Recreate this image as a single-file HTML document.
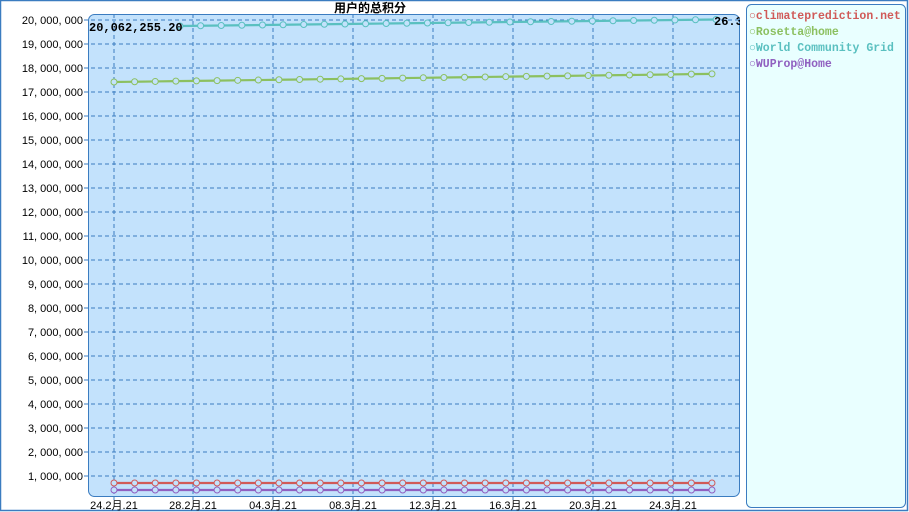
<!DOCTYPE html>
<html><head><meta charset="utf-8"><style>
html,body{margin:0;padding:0;background:#fff;}
svg{display:block;font-family:"Liberation Sans","Noto Sans CJK SC",sans-serif;}
</style></head><body>
<svg width="909" height="512" viewBox="0 0 909 512" xmlns="http://www.w3.org/2000/svg">
<defs>
<marker id="mr" markerWidth="8" markerHeight="8" refX="4" refY="4" markerUnits="userSpaceOnUse"><circle cx="4" cy="4" r="3" fill="#c3e2fc" stroke="#d05a58" stroke-width="1"/></marker>
<marker id="mg" markerWidth="8" markerHeight="8" refX="4" refY="4" markerUnits="userSpaceOnUse"><circle cx="4" cy="4" r="3" fill="#c3e2fc" stroke="#8cc060" stroke-width="1"/></marker>
<marker id="mc" markerWidth="8" markerHeight="8" refX="4" refY="4" markerUnits="userSpaceOnUse"><circle cx="4" cy="4" r="3" fill="#c3e2fc" stroke="#5ac0c0" stroke-width="1"/></marker>
<marker id="mp" markerWidth="8" markerHeight="8" refX="4" refY="4" markerUnits="userSpaceOnUse"><circle cx="4" cy="4" r="3" fill="#c3e2fc" stroke="#9060c0" stroke-width="1"/></marker>
<clipPath id="cp"><rect x="88" y="14" width="652" height="483" rx="6"/></clipPath>
</defs>
<rect x="0.5" y="0.5" width="907" height="510" fill="#fff" stroke="#3b7cc0" stroke-width="1.5"/>
<text x="370" y="12" font-size="12" font-weight="bold" text-anchor="middle" fill="#000">用户的总积分</text>
<rect x="88.5" y="14.5" width="651" height="482" rx="6" fill="#c3e2fc" stroke="#3b7cc0"/>
<g stroke="#3b7cc0" stroke-dasharray="4,3" stroke-width="1">
<path d="M84,20H740M84,44H740M84,68H740M84,92H740M84,116H740M84,140H740M84,164H740M84,188H740M84,212H740M84,236H740M84,260H740M84,284H740M84,308H740M84,332H740M84,356H740M84,380H740M84,404H740M84,428H740M84,452H740M84,476H740"/>
<path d="M114,14V500M193,14V500M273,14V500M353,14V500M433,14V500M513,14V500M593,14V500M673,14V500"/>
</g>
<g font-size="11" fill="#000" text-anchor="end">
<text x="83" y="24">20, 000, 000</text><text x="83" y="48">19, 000, 000</text><text x="83" y="72">18, 000, 000</text><text x="83" y="96">17, 000, 000</text><text x="83" y="120">16, 000, 000</text><text x="83" y="144">15, 000, 000</text><text x="83" y="168">14, 000, 000</text><text x="83" y="192">13, 000, 000</text><text x="83" y="216">12, 000, 000</text><text x="83" y="240">11, 000, 000</text><text x="83" y="264">10, 000, 000</text><text x="83" y="288">9, 000, 000</text><text x="83" y="312">8, 000, 000</text><text x="83" y="336">7, 000, 000</text><text x="83" y="360">6, 000, 000</text><text x="83" y="384">5, 000, 000</text><text x="83" y="408">4, 000, 000</text><text x="83" y="432">3, 000, 000</text><text x="83" y="456">2, 000, 000</text><text x="83" y="480">1, 000, 000</text>
</g>
<g font-size="11" fill="#000" text-anchor="middle">
<text x="114" y="509">24.2月.21</text><text x="193" y="509">28.2月.21</text><text x="273" y="509">04.3月.21</text><text x="353" y="509">08.3月.21</text><text x="433" y="509">12.3月.21</text><text x="513" y="509">16.3月.21</text><text x="593" y="509">20.3月.21</text><text x="673" y="509">24.3月.21</text>
</g>
<g fill="none" stroke-width="2.2">
<path stroke="#5ac0c0" marker-start="url(#mc)" marker-mid="url(#mc)" marker-end="url(#mc)" d="M180,26l20.62,-0.25l20.62,-0.25l20.62,-0.25l20.62,-0.25l20.62,-0.25l20.62,-0.25l20.62,-0.25l20.62,-0.25l20.62,-0.25l20.62,-0.25l20.62,-0.25l20.62,-0.25l20.62,-0.25l20.62,-0.25l20.62,-0.25l20.62,-0.25l20.62,-0.25l20.62,-0.25l20.62,-0.25l20.62,-0.25l20.62,-0.25l20.62,-0.25l20.62,-0.25l20.62,-0.25l20.62,-0.25l20.62,-0.25"/>
<path stroke="#8cc060" marker-start="url(#mg)" marker-mid="url(#mg)" marker-end="url(#mg)" d="M114,82l20.62,-0.28l20.62,-0.28l20.62,-0.28l20.62,-0.28l20.62,-0.28l20.62,-0.28l20.62,-0.28l20.62,-0.28l20.62,-0.28l20.62,-0.28l20.62,-0.28l20.62,-0.28l20.62,-0.28l20.62,-0.28l20.62,-0.28l20.62,-0.28l20.62,-0.28l20.62,-0.28l20.62,-0.28l20.62,-0.28l20.62,-0.28l20.62,-0.28l20.62,-0.28l20.62,-0.28l20.62,-0.28l20.62,-0.28l20.62,-0.28l20.62,-0.28l20.62,-0.28"/>
<path stroke="#d05a58" marker-start="url(#mr)" marker-mid="url(#mr)" marker-end="url(#mr)" d="M114,483h20.62h20.62h20.62h20.62h20.62h20.62h20.62h20.62h20.62h20.62h20.62h20.62h20.62h20.62h20.62h20.62h20.62h20.62h20.62h20.62h20.62h20.62h20.62h20.62h20.62h20.62h20.62h20.62h20.62"/>
<path stroke="#9060c0" marker-start="url(#mp)" marker-mid="url(#mp)" marker-end="url(#mp)" d="M114,490h20.62h20.62h20.62h20.62h20.62h20.62h20.62h20.62h20.62h20.62h20.62h20.62h20.62h20.62h20.62h20.62h20.62h20.62h20.62h20.62h20.62h20.62h20.62h20.62h20.62h20.62h20.62h20.62h20.62"/>
</g>
<g clip-path="url(#cp)" font-family="Liberation Mono, monospace" font-size="12" font-weight="bold" fill="#000">
<text x="89" y="31">20,062,255.20</text>
<text x="714" y="25">26.3</text>
</g>
<rect x="746.5" y="4.5" width="159" height="503" rx="5" fill="#e9ffff" stroke="#3b7cc0"/>
<g font-family="Liberation Mono, monospace" font-size="11.5" font-weight="bold">
<text x="749" y="19" fill="#d05a58">○climateprediction.net</text>
<text x="749" y="35" fill="#8cc060">○Rosetta@home</text>
<text x="749" y="51" fill="#5ac0c0">○World Community Grid</text>
<text x="749" y="67" fill="#9060c0">○WUProp@Home</text>
</g>
</svg>
</body></html>
